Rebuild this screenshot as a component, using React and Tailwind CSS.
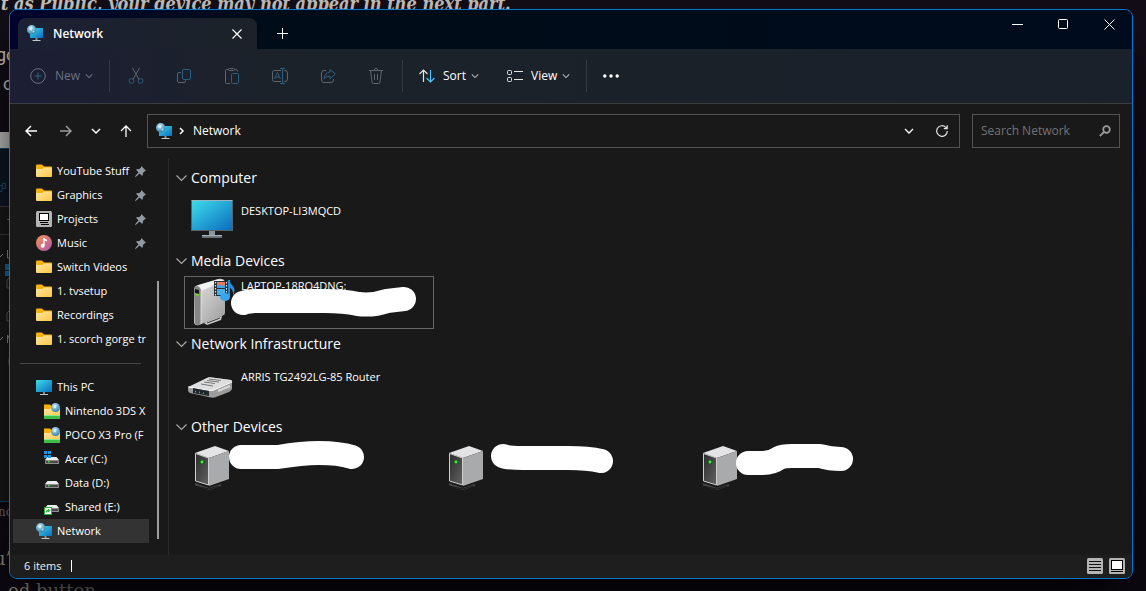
const quickAccess = [
  { name: 'YouTube Stuff', icon: 'folder', pinned: true },
  { name: 'Graphics', icon: 'folder', pinned: true },
  { name: 'Projects', icon: 'projects', pinned: true },
  { name: 'Music', icon: 'music', pinned: true },
  { name: 'Switch Videos', icon: 'folder' },
  { name: '1. tvsetup', icon: 'folder' },
  { name: 'Recordings', icon: 'folder' },
  { name: '1. scorch gorge tr', icon: 'folder' },
];

const places = [
  { name: 'This PC', icon: 'pc' },
  { name: 'Nintendo 3DS X', icon: 'ftp', child: true },
  { name: 'POCO X3 Pro (F', icon: 'ftp', child: true },
  { name: 'Acer (C:)', icon: 'system', child: true },
  { name: 'Data (D:)', icon: 'drive', child: true },
  { name: 'Shared (E:)', icon: 'shared', child: true },
  { name: 'Network', icon: 'network', active: true },
];

const groups = [
  { title: 'Computer', items: [{ name: 'DESKTOP-LI3MQCD', icon: 'monitor' }] },
  {
    title: 'Media Devices',
    items: [
      {
        name: 'LAPTOP-18RQ4DNG:',
        icon: 'media',
        selected: true,
        stroke: 'M59 27 Q64 25 75 25 L141 25 Q160 25 174 28 Q188 30 203 25 L220 23',
      },
    ],
  },
  { title: 'Network Infrastructure', items: [{ name: 'ARRIS TG2492LG-85 Router', icon: 'router' }] },
  {
    title: 'Other Devices',
    items: [
      { icon: 'server', stroke: 'M57 15 L94 15 Q118 11 135 11 Q155 11 168 15' },
      { icon: 'server', stroke: 'M65 14 Q70 16 85 16 L130 16 Q150 16 163 19' },
      { icon: 'server', stroke: 'M56 21 L71 21 Q80 21 87 16 Q91 14 100 14 L128 14 Q138 17 149 17' },
    ],
  },
];

function Gradients() {
  return (
    <svg width="0" height="0" className="absolute" aria-hidden="true">
      <defs>
        <linearGradient id="screen" x1="0" y1="0" x2="1" y2="1">
          <stop offset="0" stopColor="#3ddcea" />
          <stop offset="1" stopColor="#0b6cc0" />
        </linearGradient>
        <linearGradient id="folder" x1="0" y1="0" x2="1" y2="1">
          <stop offset="0" stopColor="#ffe9a6" />
          <stop offset="1" stopColor="#ffc843" />
        </linearGradient>
        <linearGradient id="music" x1="0" y1="0" x2="1" y2="1">
          <stop offset="0" stopColor="#f09a55" />
          <stop offset="0.5" stopColor="#d9707c" />
          <stop offset="1" stopColor="#a45ab8" />
        </linearGradient>
        <linearGradient id="metal" x1="0" y1="0" x2="1" y2="1">
          <stop offset="0" stopColor="#e4e4e4" />
          <stop offset="1" stopColor="#9b9b9b" />
        </linearGradient>
        <linearGradient id="dark" x1="0" y1="0" x2="1" y2="1">
          <stop offset="0" stopColor="#2d2d2d" />
          <stop offset="1" stopColor="#626262" />
        </linearGradient>
        <radialGradient id="globe" cx="0.4" cy="0.3" r="0.8">
          <stop offset="0" stopColor="#c5e6f5" />
          <stop offset="0.5" stopColor="#6aaed0" />
          <stop offset="1" stopColor="#2b6f9c" />
        </radialGradient>
      </defs>
    </svg>
  );
}

function NetworkIcon() {
  return (
    <svg viewBox="0 0 17 17" className="size-[17px] shrink-0">
      <rect x="3" y="3" width="13" height="10" fill="url(#screen)" />
      <path d="M8.500 13h2v2h-2z" fill="#8a9298" />
      <path d="M5.500 15h8v1h-8z" fill="#c3c9cd" />
      <circle cx="4.700" cy="4.700" r="4.700" fill="url(#globe)" />
      <path d="M2 3.500Q4 1 6 2.500Q4.500 3.500 5 5Q3 6 2 3.500z" fill="#e3f4fb" opacity=".8" />
      <path d="M5.500 6Q7 5 8 6Q7 8 6 8z" fill="#d4ecf7" opacity=".6" />
    </svg>
  );
}

function DriveBody() {
  return (
    <>
      <path d="M3.500 6h9l2.500 3H1z" fill="#ececec" />
      <rect x="1" y="9" width="14" height="4" rx=".5" fill="#8c8c8c" />
      <rect x="2" y="10" width="12" height="2" fill="#4a4a4a" />
      <rect x="4" y="10" width="1.500" height="1.500" fill="#3bdc3b" />
    </>
  );
}

function SmallIcon({ name }) {
  if (name === 'network') return <NetworkIcon />;
  return (
    <svg viewBox="0 0 16 16" className="size-4 shrink-0">
      {name === 'folder' && (
        <>
          <path d="M0 2.500Q0 1.500 1 1.500H6L8 3.500H15Q16 3.500 16 4.500V8H0z" fill="#f5b20f" />
          <path d="M0 6H6.500L8 4.500H15.200Q16 4.500 16 5.300V13Q16 14 15 14H1Q0 14 0 13z" fill="url(#folder)" />
        </>
      )}
      {name === 'projects' && (
        <>
          <rect width="16" height="16" rx="1.500" fill="#b4b4b4" />
          <rect x="3.500" y="2.500" width="9" height="7" fill="#fff" stroke="#000" />
          <path d="M4 11.500h8M5 13.500h8" stroke="#000" />
        </>
      )}
      {name === 'music' && (
        <>
          <circle cx="8" cy="8" r="8" fill="url(#music)" />
          <path d="M8 3v7" stroke="#fff" strokeWidth="1.400" />
          <path d="M7.500 3Q9 3.500 11 5V6.500Q9 5.500 8 5.500z" fill="#fff" />
          <circle cx="6.700" cy="10.700" r="2" fill="#fff" />
        </>
      )}
      {name === 'pc' && (
        <>
          <rect x="0" y="1" width="16" height="12" rx=".5" fill="url(#screen)" />
          <path d="M7 13h2v2H7z" fill="#7c858b" />
          <path d="M4 15h8v1H4z" fill="#b9c0c5" />
        </>
      )}
      {name === 'ftp' && (
        <>
          <path d="M0 1.500H6L7.500 3H15V8H0z" fill="#f5b20f" />
          <path d="M0 6H6L7.500 4.500H16V13H0z" fill="url(#folder)" />
          <rect y="12" width="16" height="4" fill="#3fbf48" />
          <path d="M0 12.500h16" stroke="#8fe596" />
          <circle cx="11.500" cy="4.500" r="4.500" fill="url(#globe)" />
          <path d="M9 3.500Q11 1 13 2.500Q11.500 3.500 12 5Q10 6 9 3.500z" fill="#e3f4fb" opacity=".8" />
        </>
      )}
      {name === 'drive' && <DriveBody />}
      {name === 'system' && (
        <>
          <DriveBody />
          <path d="M0 0h3v3H0zM4 0h3v3H4zM0 4h3v3H0zM4 4h3v3H4z" fill="#1b95e8" />
        </>
      )}
      {name === 'shared' && (
        <>
          <DriveBody />
          <rect x=".5" y="8.500" width="7" height="7" fill="#fff" stroke="#2cab35" />
          <path d="M2 14V12Q2 11 4 11V9.800L6.500 11.800L4 13.500V12.500Q2.500 12.500 2 14z" fill="#2cab35" />
        </>
      )}
    </svg>
  );
}

function PinIcon() {
  return (
    <svg viewBox="0 0 11 11" className="size-[11px] shrink-0" fill="#8f9aa3" aria-label="Pinned">
      <path d="M6.300 0L11 4.700L9.700 5.200L7.800 7.300Q8.200 9 7.200 10L4.700 7.500L1 10.800L0 11L.3 10L3.500 6.300L1 3.800Q2.200 2.800 4 3.200L6 1.400z" />
    </svg>
  );
}

function DeviceIcon({ name }) {
  return (
    <svg viewBox="0 0 48 48" className="size-12 shrink-0">
      {name === 'monitor' && (
        <>
          <rect x="4" y="5" width="42" height="31" fill="#56636c" />
          <rect x="5" y="6" width="40" height="29" fill="url(#screen)" />
          <path d="M4.500 5.500h41" stroke="#9db4bd" />
          <rect x="22" y="36" width="6" height="5" fill="#8b959d" />
          <path d="M15 40h20v3H15z" fill="#69747c" />
          <path d="M15 40.500h20" stroke="#a9b3ba" />
        </>
      )}
      {name === 'media' && (
        <>
          <path d="M20 47l14-5 1-4-7 2-11 5z" fill="#cacaca" />
          <path d="M20 45l13-5" stroke="#343434" />
          <path d="M7 12Q7 8 11 7L31 1Q37 0 38 4V35Q38 37 35 38L12 47Q8 48 7 45z" fill="url(#metal)" />
          <path d="M7 12Q7 8 10 8Q14 9 14 13V46Q10 48 8 46z" fill="#858585" />
          <path d="M14 13Q14 9 11 7.500L31 1.500Q36 1 37 3z" fill="#f3f3f3" />
          <path d="M8 11l4 1v5l-4-1z" fill="#151515" />
          <path d="M8 15l4 1v2l-4-1z" fill="#79d624" />
          <path d="M14 13V46" stroke="#f5f5f5" opacity=".7" />
          <rect x="27" y="3" width="14" height="15" fill="#252d35" />
          <rect x="30" y="4" width="8" height="6" fill="#ed7954" />
          <path d="M30 8l3-2 2 2 3-1v3h-8z" fill="#3fa2e2" />
          <rect x="30" y="11" width="8" height="6" fill="#48afe7" />
          <path d="M28.500 4v14M39.500 4v14" stroke="#e5e5e5" strokeWidth="1.200" strokeDasharray="1.500 1.500" />
          <path d="M42 2v17" stroke="#188bdc" strokeWidth="2" />
          <path d="M41 2h2Q43 6 46 8Q49 12 46 18Q47 12 42 9z" fill="#258fe0" />
          <ellipse cx="38" cy="19" rx="5" ry="4" fill="#3aa5ef" />
        </>
      )}
      {name === 'router' && (
        <>
          <path d="M1 27L20 17Q22 16 25 16.500L44 19Q46 20 45 22V28Q44 30 42 31L29 36Q27 37 24 36.500L3 32Q1 31 1 29z" fill="#9c9c9c" />
          <path d="M1 26L20 17Q22 16 25 16.500L44 19Q46 20 44 21L29 28Q26 30 22 29z" fill="#dedede" />
          <path d="M1 26L23 29.500Q26 30 29 28L45 21" stroke="#fff" fill="none" />
          <path d="M6 27l16 3v5L6 32z" fill="#1d252d" />
          <path d="M8 30.500l12 2.500" stroke="#42ca53" strokeWidth="1.500" strokeDasharray="1 3" />
          <path d="M17 21l11 1.500M20 19.500l12 1.500M22 18l12 1.500M14 23l12 2" stroke="#777" />
          <path d="M31 30l12-5" stroke="#d9d9d9" strokeWidth="2" />
        </>
      )}
      {name === 'server' && (
        <>
          <path d="M8 39l14 5 12-4v2l-12 4-14-4z" fill="#454545" />
          <path d="M8 42l14 3 10-3" stroke="#1a1a1a" fill="none" />
          <path d="M8 9L28 2L42 7L22 14z" fill="#e4e4e6" />
          <path d="M22 14L42 7V35L22 42z" fill="#a9aaac" />
          <path d="M8.500 9.500L21.500 14V41L8.500 37z" fill="url(#dark)" stroke="#cfcfcf" />
          <circle cx="15" cy="18" r="2.200" fill="#135e13" />
          <circle cx="15" cy="18" r="1.400" fill="#3cfa38" />
        </>
      )}
    </svg>
  );
}

function Chevron({ className }) {
  return (
    <svg viewBox="0 0 10 10" className={className} fill="none" stroke="currentColor" strokeWidth="1.300">
      <path d="M1 3l4 4 4-4" />
    </svg>
  );
}

const editTools = [
  {
    label: 'Cut',
    art: (
      <>
        <path d="M4.500 0L11 11.500M11.500 0L5 11.500" />
        <circle cx="3.500" cy="13" r="2.400" stroke="#2b5f80" />
        <circle cx="12.500" cy="13" r="2.400" stroke="#2b5f80" />
      </>
    ),
  },
  {
    label: 'Copy',
    art: (
      <>
        <path d="M5 4.500H3Q1.500 4.500 1.500 6V13Q1.500 14.500 3 14.500H8Q9.500 14.500 9.500 12.500" />
        <rect x="6.500" y="1.500" width="8" height="10" rx="1.500" stroke="#2b5f80" />
      </>
    ),
  },
  {
    label: 'Paste',
    art: (
      <>
        <path d="M4.500 1.500H2.500Q1.500 1.500 1.500 2.500V14.500Q1.500 15.500 2.500 15.500H6M10.500 1.500h1.500Q13.500 1.500 13.500 3.500" />
        <rect x="4.500" y=".5" width="6" height="2" rx="1" />
        <rect x="7.500" y="5.500" width="7" height="10" rx="1" stroke="#2b5f80" />
      </>
    ),
  },
  {
    label: 'Rename',
    art: (
      <>
        <path d="M9 2.500H2.500Q.5 2.500 .5 4.500V11.500Q.5 13.500 2.500 13.500H9M12 2.500h1Q15.500 2.500 15.500 5V11Q15.500 13.500 13 13.500H12" />
        <path d="M10.500 1V15M8 .5h5M8 15.500h5M2.500 11L5.500 4.500L8.500 11M3.500 9h4" stroke="#2b5f80" />
      </>
    ),
  },
  {
    label: 'Share',
    art: (
      <>
        <path d="M6 2.500H4Q1.500 2.500 1.500 5V12Q1.500 14.500 4 14.500H11Q13.500 14.500 13.500 12V11" />
        <path d="M10 1.500L15.500 6L10 10.500V8Q6 8 4 11Q5 4.500 10 4z" stroke="#2b5f80" strokeLinejoin="round" />
      </>
    ),
  },
  {
    label: 'Delete',
    art: (
      <path d="M1 2.500H15M6 2.500Q6 .5 8 .5Q10 .5 10 2.500M2.500 2.500L4 14Q4.200 15.500 5.500 15.500H10.500Q11.800 15.500 12 14L13.500 2.500M6.500 6V12M9.500 6V12" />
    ),
  },
];

function Separator() {
  return <div className="h-8 w-px shrink-0 bg-[#343a42]" />;
}

function TitleBar() {
  return (
    <header className="flex h-[39px] items-end bg-linear-to-r from-[#00042d] via-[#000c17] via-25% to-[#000b1d] pl-2">
      <div className="flex h-[31px] w-[239px] items-center rounded-t-lg bg-linear-to-r from-[#1c2034] to-[#1c2228] pr-3 pl-[9px] text-white">
        <NetworkIcon />
        <h1 className="ml-[9px] flex-1 text-xs font-semibold">Network</h1>
        <button aria-label="Close tab" className="flex size-4 items-center justify-center">
          <svg viewBox="0 0 10 10" className="size-[10px]" stroke="currentColor" strokeWidth="1.200">
            <path d="M.5 .5l9 9M9.500 .5l-9 9" />
          </svg>
        </button>
      </div>
      <button aria-label="New tab" className="ml-[15px] flex h-[31px] w-5 items-center justify-center text-white">
        <svg viewBox="0 0 11 11" className="size-[11px]" stroke="currentColor">
          <path d="M5.500 0v11M0 5.500h11" />
        </svg>
      </button>
      <div className="ml-auto flex self-start text-white">
        <button aria-label="Minimize" className="flex h-[29px] w-[46px] items-center justify-center">
          <svg viewBox="0 0 11 11" className="size-[11px]" stroke="currentColor">
            <path d="M0 5.500h11" />
          </svg>
        </button>
        <button aria-label="Maximize" className="flex h-[29px] w-[46px] items-center justify-center">
          <svg viewBox="0 0 11 11" className="size-[11px]" stroke="currentColor" fill="none">
            <rect x=".5" y=".5" width="9" height="9" rx="1" />
          </svg>
        </button>
        <button aria-label="Close" className="flex h-[29px] w-[46px] items-center justify-center">
          <svg viewBox="0 0 11 11" className="size-[11px]" stroke="currentColor">
            <path d="M.5 .5l10 10M10.500 .5l-10 10" />
          </svg>
        </button>
      </div>
    </header>
  );
}

function Toolbar() {
  return (
    <div className="flex h-[55px] items-center border-b border-[#3a3c3f] bg-linear-to-r from-[#1c1e34] via-[#1c2229] via-25% to-[#1b212b] text-xs text-white">
      <button disabled className="flex h-8 w-[99px] items-center pl-5 text-[#6c7080]">
        <svg viewBox="0 0 16 16" className="size-4" fill="none" stroke="currentColor">
          <circle cx="8" cy="8" r="7.300" />
          <path d="M8 4.500v7M4.500 8h7" stroke="#2e6688" />
        </svg>
        <span className="mr-[5px] ml-[9px]">New</span>
        <Chevron className="size-2" />
      </button>
      <Separator />
      <div className="flex gap-2 px-[6px]">
        {editTools.map((tool) => (
          <button key={tool.label} aria-label={tool.label} disabled className="flex h-8 w-10 items-center justify-center text-[#5f646b]">
            <svg viewBox="0 0 16 16" className="size-4" fill="none" stroke="currentColor">
              {tool.art}
            </svg>
          </button>
        ))}
      </div>
      <Separator />
      <button className="flex h-8 items-center pl-4">
        <svg viewBox="0 0 16 14" className="h-[14px] w-4" fill="none" stroke="#e4e4e4" strokeWidth="1.200">
          <path d="M4.500 13V1M.5 5l4-4 4 4" />
          <path d="M11.500 1v12M7.500 9l4 4 4-4" stroke="#4cc2ff" />
        </svg>
        <span className="mr-[5px] ml-2">Sort</span>
        <Chevron className="size-2 text-[#b5b8bc]" />
      </button>
      <button className="flex h-8 items-center pl-7">
        <svg viewBox="0 0 16 14" className="h-[14px] w-4" fill="none" stroke="#e4e4e4">
          <rect x=".5" y="1.500" width="4" height="4" rx="1" />
          <rect x=".5" y="8.500" width="4" height="4" rx="1" />
          <path d="M7 2.500h9M7 10.500h9" />
        </svg>
        <span className="mr-[5px] ml-2">View</span>
        <Chevron className="size-2 text-[#b5b8bc]" />
      </button>
      <div className="ml-4">
        <Separator />
      </div>
      <button aria-label="See more" className="flex h-8 w-12 items-center justify-center">
        <svg viewBox="0 0 16 4" className="h-1 w-4" fill="currentColor">
          <circle cx="1.800" cy="2" r="1.700" />
          <circle cx="8" cy="2" r="1.700" />
          <circle cx="14.200" cy="2" r="1.700" />
        </svg>
      </button>
    </div>
  );
}

function AddressRow() {
  return (
    <div className="flex items-center pt-[10px] pr-3 pb-[11px] pl-[3px] text-xs text-white">
      <button aria-label="Back" className="flex h-8 w-[35px] items-center justify-center">
        <svg viewBox="0 0 12 12" className="size-3" fill="none" stroke="currentColor" strokeWidth="1.500">
          <path d="M12 6H1M6 1L1 6l5 5" />
        </svg>
      </button>
      <button aria-label="Forward" className="flex h-8 w-[35px] items-center justify-center text-[#9a9a9a]">
        <svg viewBox="0 0 12 12" className="size-3" fill="none" stroke="currentColor" strokeWidth="1.500">
          <path d="M0 6h11M6 1l5 5-5 5" />
        </svg>
      </button>
      <button aria-label="Recent locations" className="flex h-8 w-[26px] items-center justify-center">
        <svg viewBox="0 0 10 10" className="size-[10px]" fill="none" stroke="currentColor" strokeWidth="1.500">
          <path d="M1 3l4 4 4-4" />
        </svg>
      </button>
      <button aria-label="Up" className="flex h-8 w-[34px] items-center justify-center">
        <svg viewBox="0 0 12 12" className="size-3" fill="none" stroke="currentColor" strokeWidth="1.300">
          <path d="M6 12V1M1 6l5-5 5 5" />
        </svg>
      </button>
      <nav aria-label="Address" className="ml-1 flex h-[34px] flex-1 items-center border border-[#535353] pl-2">
        <NetworkIcon />
        <svg viewBox="0 0 6 8" className="ml-[6px] h-2 w-[6px]" fill="none" stroke="currentColor" strokeWidth="1.500">
          <path d="M1 1l3 3-3 3" />
        </svg>
        <a href="#network" className="ml-2">Network</a>
        <button aria-label="Previous locations" className="ml-auto flex size-8 items-center justify-center">
          <Chevron className="size-[10px]" />
        </button>
        <button aria-label="Refresh" className="flex h-8 w-[34px] items-center justify-center">
          <svg viewBox="0 0 12 12" className="size-3" fill="none" stroke="#e4e4e4" strokeWidth="1.200">
            <path d="M11.300 6A5.300 5.300 0 1 1 9.800 2.300L11 3.500M11.200 .3V3.700H7.800" />
          </svg>
        </button>
      </nav>
      <form className="ml-3 flex h-[34px] w-[148px] items-center border border-[#535353] px-2" role="search">
        <input aria-label="Search Network" placeholder="Search Network" className="min-w-0 flex-1 bg-transparent outline-none placeholder:text-[#737373]" />
        <svg viewBox="0 0 12 12" className="size-3 shrink-0" fill="none" stroke="#9b9b9b">
          <circle cx="7.500" cy="4.500" r="3.300" strokeWidth="1.800" />
          <path d="M5 7L.8 11.200" strokeWidth="1.800" />
        </svg>
      </form>
    </div>
  );
}

function NavItem({ item }) {
  return (
    <li>
      <a
        href="#place"
        className={`flex h-6 items-center overflow-hidden whitespace-nowrap ${item.child ? 'pl-[31px]' : 'pl-[23px]'} ${item.active ? 'bg-[#333333]' : ''}`}
      >
        <SmallIcon name={item.icon} />
        <span className={`${item.active ? 'ml-1' : 'ml-[5px]'} flex-1`}>{item.name}</span>
        {item.pinned && (
          <span className="mr-[3px]">
            <PinIcon />
          </span>
        )}
      </a>
    </li>
  );
}

function Sidebar() {
  return (
    <aside className="flex w-[159px] shrink-0 border-r border-[#2b2b2b] pb-3 text-[11px] text-white">
      <nav className="w-[139px] pl-[3px]">
        <ul>
          {quickAccess.map((item) => (
            <NavItem key={item.name} item={item} />
          ))}
        </ul>
        <div className="flex h-6 items-center pr-2 pl-[7px]">
          <hr className="w-full border-[#464646]" />
        </div>
        <ul>
          {places.map((item) => (
            <NavItem key={item.name} item={item} />
          ))}
        </ul>
      </nav>
      <div className="mt-[122px] mb-1 ml-2 w-[2px] bg-[#9d9d9d]" />
    </aside>
  );
}

function Device({ item }) {
  return (
    <li
      className={`relative flex h-[53px] w-[250px] gap-[6px] border pt-px pl-[2px] text-[11px] leading-4 text-white ${item.selected ? 'border-[#666666]' : 'border-transparent'}`}
    >
      <DeviceIcon name={item.icon} />
      <span className={item.selected ? '' : 'pt-2'}>{item.name}</span>
      {item.stroke && (
        <svg className="absolute -top-px -left-px h-[53px] w-[250px] overflow-visible" fill="none" stroke="#fff" strokeWidth="24" strokeLinecap="round" strokeLinejoin="round">
          <path d={item.stroke} />
        </svg>
      )}
    </li>
  );
}

function DeviceGroups() {
  return (
    <main className="min-w-0 flex-1 pt-1 pl-[7px]">
      {groups.map((group) => (
        <section key={group.title} className="pl-2">
          <h2 className="-ml-2 text-sm text-white">
            <button className="flex h-[30px] items-center gap-1">
              <svg viewBox="0 0 11 8" className="h-2 w-[11px]" fill="none" stroke="#a8a8a8" strokeWidth="1.200">
                <path d="M.5 1.500l5 5 5-5" />
              </svg>
              {group.title}
            </button>
          </h2>
          <ul className="flex flex-wrap gap-x-1">
            {group.items.map((item, i) => (
              <Device key={i} item={item} />
            ))}
          </ul>
        </section>
      ))}
    </main>
  );
}

function StatusBar() {
  return (
    <footer className="flex h-[23px] items-center bg-[#1e1e1e] pr-[7px] pb-px pl-[14px] text-[11px] text-[#eeeeee]">
      <span>6 items</span>
      <span className="ml-[10px] h-3 w-px bg-white" />
      <div className="ml-auto flex gap-[6px]">
        <button aria-label="Details view">
          <svg viewBox="0 0 16 16" className="block size-4">
            <rect width="16" height="16" rx="1.500" fill="#b4b4b4" />
            <path d="M2 3.500h12M2 6.500h12M2 9.500h12M2 12.500h12" stroke="#111" />
          </svg>
        </button>
        <button aria-label="Large icons view">
          <svg viewBox="0 0 16 16" className="block size-4">
            <rect width="16" height="16" rx="1.500" fill="#b4b4b4" />
            <rect x="2.500" y="2.500" width="11" height="9" fill="#fff" stroke="#000" />
            <path d="M2 13.500h12" stroke="#000" />
          </svg>
        </button>
      </div>
    </footer>
  );
}

// Page and second window that lie behind the explorer window
function Backdrop() {
  return (
    <div
      aria-hidden="true"
      className="absolute inset-0 overflow-hidden bg-linear-to-b from-[#130d17] to-[#0d0912] whitespace-nowrap text-[#c4c1bc] [font-family:'DejaVu_Serif',serif]"
    >
      <p className="-mt-[10px] h-[55px] pl-px text-lg leading-7 font-bold italic [font-family:'DejaVu_Serif_Condensed','DejaVu_Serif',serif]">t as Public, your device may not appear in the next part.</p>
      <p className="-ml-1 h-[29px] text-lg leading-5 [font-family:Roboto,sans-serif]">go</p>
      <p className="ml-[3px] h-[58px] text-lg leading-5 [font-family:Roboto,sans-serif]">o</p>
      <div className="h-4 w-4 bg-[#b9b9b9]" />
      <div className="h-[354px] w-4 overflow-hidden border-y border-[#0b446f] bg-[#181818] [font-family:'Open_Sans',sans-serif]">
        <div className="h-[58px] border-b border-[#3a3a3a] bg-[#0e1623] pt-[34px]">
          <svg viewBox="0 0 8 10" className="h-[10px] w-2" fill="none" stroke="#234a66">
            <path d="M0 2.500h2M2.500 .5h3v5h-3zM0 8.500h2v-3" />
          </svg>
        </div>
        <div className="h-[28px] border-b border-[#3a3a3a] pt-2 pl-[7px] text-[11px] leading-4 text-[#8f8f8f]">T</div>
        <svg viewBox="0 0 10 150" className="h-[150px] w-[10px]" fill="none" stroke="#8a8a8a">
          <path d="M0 22l3-3M0 105l3-3" />
          <path d="M7.500 15v8h3M7.500 108v-8l4 8" />
          <path d="M5 29h5v6H5zM5 36h5v5H5z" fill="#126a9f" stroke="none" />
          <path d="M10 42L7 45v8h3M10 75l-3 3v8h3" stroke="#5a5a5a" />
          <path d="M10 117q-2 9 0 20" stroke="#777" />
        </svg>
      </div>
      <p className="-ml-[2px] h-[41px] text-xs leading-5 text-[#6f6c70]">no</p>
      <p className="-ml-[6px] h-[38px] text-lg leading-8 text-[#8f8c85]">u’ll</p>
      <p className="pl-2 text-lg leading-5 text-[#8f8c85]">ed button</p>
    </div>
  );
}

export default function App() {
  return (
    <div className="relative flex min-h-screen pt-[9px] pr-[13px] pb-3 pl-[9px] [font-family:'Open_Sans','Noto_Sans',sans-serif]">
      <Gradients />
      <Backdrop />
      <div className="relative flex min-w-0 flex-1 flex-col overflow-hidden rounded-lg border border-[#0078d4] bg-[#191919] shadow-2xl shadow-black">
        <TitleBar />
        <Toolbar />
        <AddressRow />
        <div className="flex flex-1">
          <Sidebar />
          <DeviceGroups />
        </div>
        <StatusBar />
      </div>
    </div>
  );
}
